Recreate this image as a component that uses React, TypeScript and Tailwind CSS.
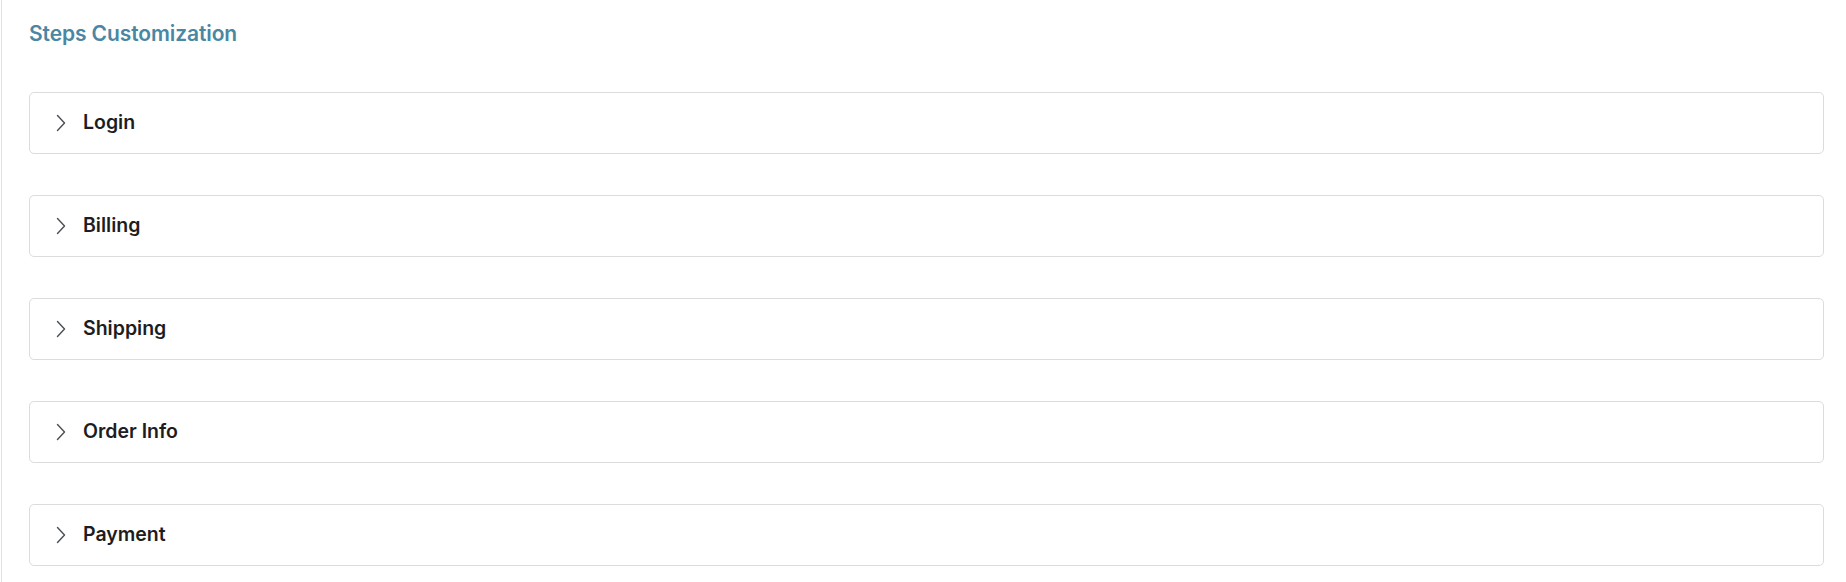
import React from "react";

const steps = ["Login", "Billing", "Shipping", "Order Info", "Payment"];

function Chevron() {
  return (
    <svg width="10" height="18" viewBox="0 0 10 18" fill="none" className="shrink-0">
      <path d="M1.5 1.5 L8.5 9 L1.5 16.5" stroke="#4b4f55" strokeWidth="1.4" strokeLinecap="round" strokeLinejoin="round" />
    </svg>
  );
}

export default function App() {
  return (
    <div className="w-[1846px] h-[582px] bg-white overflow-hidden" style={{ fontFamily: "Inter, 'Liberation Sans', sans-serif" }}>
      <div className="ml-px h-full border-l border-[#e2e2e2] pl-[27px] pr-[22px] pt-[21px]">
        <h2 className="text-[21px] leading-[26px] font-semibold text-[#4a87a2] tracking-[-0.1px]">Steps Customization</h2>
        <div className="mt-[45px] flex flex-col gap-[41px]">
          {steps.map((s) => (
            <div key={s} className="h-[62px] rounded-[5px] border border-[#dcdcdc] bg-white flex items-center pl-[26px]">
              <Chevron />
              <span className="ml-[17px] text-[19.5px] font-semibold text-[#1d1d1f]">{s}</span>
            </div>
          ))}
        </div>
      </div>
    </div>
  );
}
